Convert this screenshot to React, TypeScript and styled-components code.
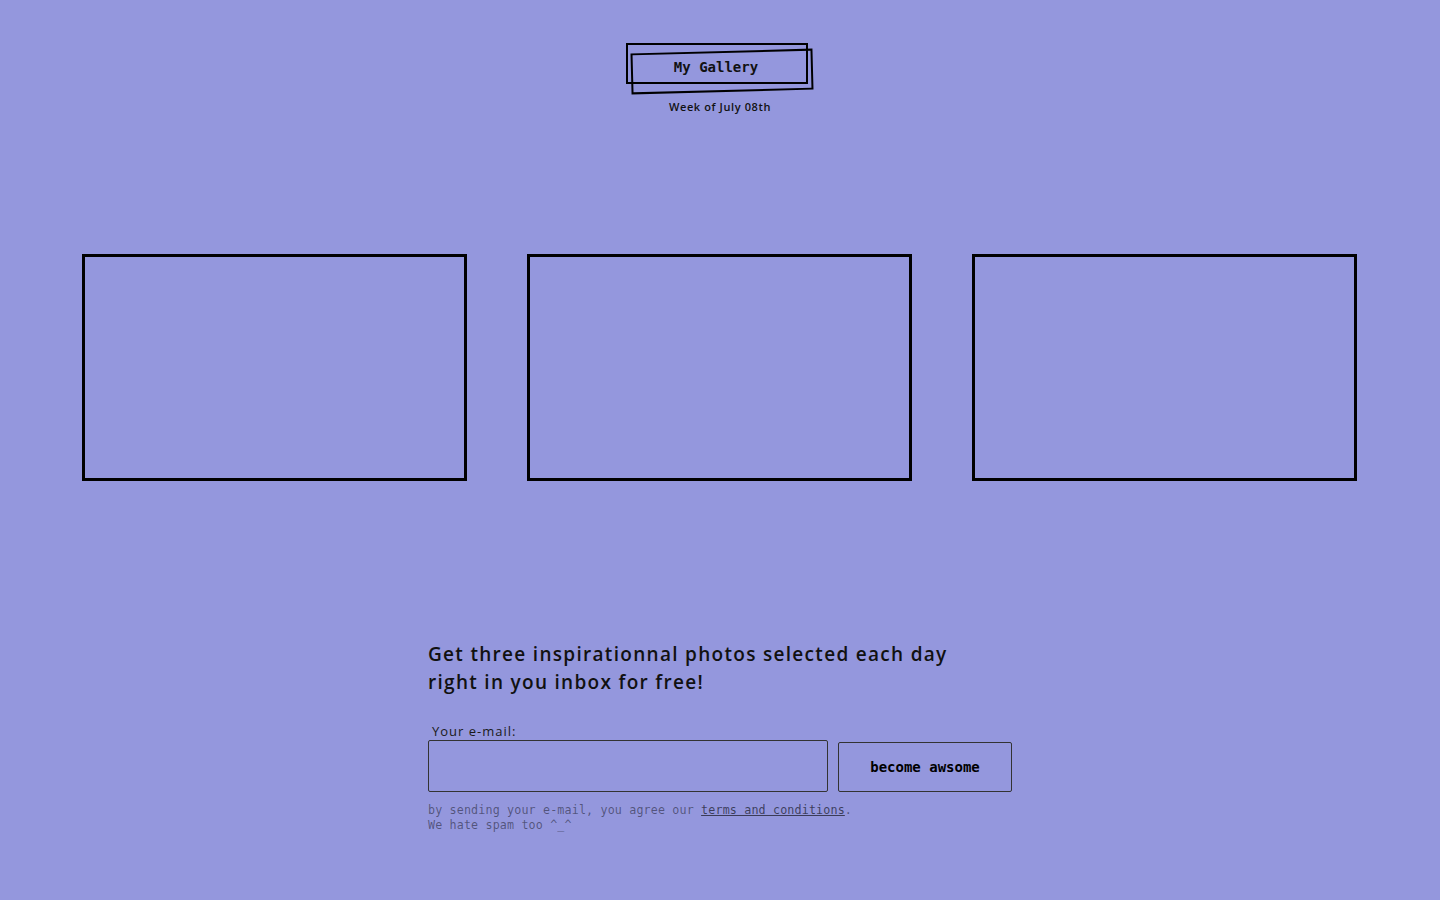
import React, { useState } from "react";
import styled, { createGlobalStyle } from "styled-components";

const GlobalStyle = createGlobalStyle`
  html, body {
    margin: 0;
    padding: 0;
    background-color: #9497dd;
  }
  body {
    font-family: "Open Sans", "DejaVu Sans", sans-serif;
    color: #111;
  }
`;

const Page = styled.div`
  min-height: 900px;
  display: flex;
  flex-direction: column;
  align-items: center;
`;

const Header = styled.header`
  padding-top: 43px;
  display: flex;
  flex-direction: column;
  align-items: center;
  gap: 15px;
`;

const Title = styled.h1`
  position: relative;
  margin: 0 0 0 -6px;
  width: 182px;
  height: 41px;
  box-sizing: border-box;
  border: 2px solid #000;
  display: flex;
  align-items: center;
  justify-content: center;
  padding: 6px 2px 0 0;
  font-family: "DejaVu Sans Mono", monospace;
  font-size: 14px;
  font-weight: bold;
  color: #111;
  &::after {
    content: "";
    position: absolute;
    inset: -2px;
    border: 2px solid #000;
    transform: translate(5px, 8px) rotate(-1.5deg);
  }
`;

const Subtitle = styled.span`
  font-size: 11px;
  font-weight: 600;
  letter-spacing: 0.6px;
  line-height: 15px;
  color: #111;
`;

const Gallery = styled.section`
  margin: 140px 0 0 -1px;
  display: flex;
  gap: 60px;
`;

const Frame = styled.div`
  width: 385px;
  height: 227px;
  box-sizing: border-box;
  border: 3px solid #000;
`;

const Signup = styled.section`
  margin-top: 159px;
  width: 584px;
  display: flex;
  flex-direction: column;
`;

const Pitch = styled.p`
  margin: 0;
  font-size: 19px;
  font-weight: 600;
  letter-spacing: 1.3px;
  line-height: 28px;
  color: #111;
`;

const Label = styled.label`
  margin: 26px 0 0 4px;
  font-size: 13px;
  letter-spacing: 1px;
  line-height: 18px;
  color: #1a1a1a;
`;

const FormRow = styled.form`
  display: flex;
  align-items: flex-end;
  gap: 10px;
`;

const EmailInput = styled.input`
  width: 400px;
  height: 52px;
  box-sizing: border-box;
  border: 1px solid #333;
  border-radius: 2px;
  background: transparent;
  padding: 0 12px;
  font-family: "DejaVu Sans Mono", monospace;
  font-size: 14px;
  outline: none;
`;

const SubmitButton = styled.button`
  width: 174px;
  height: 50px;
  box-sizing: border-box;
  border: 1px solid #333;
  border-radius: 2px;
  background: transparent;
  font-family: "DejaVu Sans Mono", monospace;
  font-size: 14px;
  font-weight: bold;
  color: #000;
  cursor: pointer;
`;

const FinePrint = styled.p`
  margin: 11px 0 0;
  font-family: "DejaVu Sans Mono", monospace;
  font-size: 11.7px;
  letter-spacing: 0.15px;
  line-height: 15px;
  color: rgba(0, 0, 0, 0.45);
  a {
    color: rgba(0, 0, 0, 0.6);
  }
`;

export default function App() {
  const [email, setEmail] = useState("");
  const frames = [1, 2, 3];
  return (
    <>
      <GlobalStyle />
      <Page>
        <Header>
          <Title>My Gallery</Title>
          <Subtitle>Week of July 08th</Subtitle>
        </Header>
        <Gallery>
          {frames.map((f) => (
            <Frame key={f} />
          ))}
        </Gallery>
        <Signup>
          <Pitch>
            Get three inspirationnal photos selected each day
            <br />
            right in you inbox for free!
          </Pitch>
          <Label htmlFor="email">Your e-mail:</Label>
          <FormRow onSubmit={(e) => e.preventDefault()}>
            <EmailInput
              id="email"
              type="email"
              value={email}
              onChange={(e) => setEmail(e.target.value)}
            />
            <SubmitButton type="submit">become awsome</SubmitButton>
          </FormRow>
          <FinePrint>
            by sending your e-mail, you agree our{" "}
            <a href="#">terms and conditions</a>.
            <br />
            We hate spam too ^_^
          </FinePrint>
        </Signup>
      </Page>
    </>
  );
}
